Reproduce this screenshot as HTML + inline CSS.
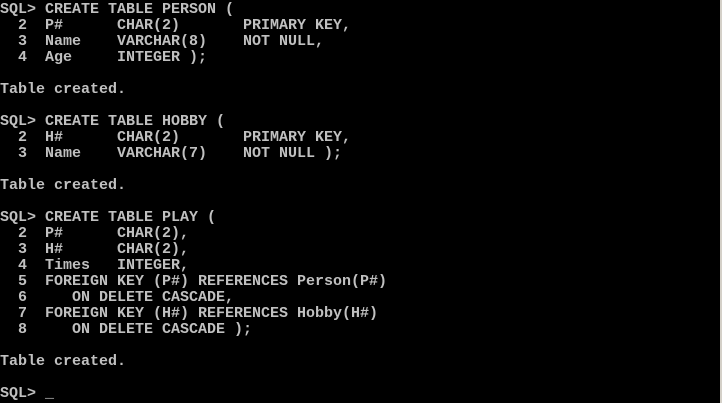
<!DOCTYPE html>
<html><head><style>
html,body{margin:0;padding:0;background:#000;}
body{width:722px;height:403px;overflow:hidden;position:relative;}
pre{margin:0;position:absolute;left:0;top:2px;font-family:"Liberation Mono",monospace;font-size:15px;line-height:16px;color:#c0c0c0;font-weight:bold;}
.edge{position:absolute;right:0;top:0;width:2px;height:403px;background:#d4d0c8;}
</style></head><body>
<pre>SQL&gt; CREATE TABLE PERSON (
  2  P#      CHAR(2)       PRIMARY KEY,
  3  Name    VARCHAR(8)    NOT NULL,
  4  Age     INTEGER );

Table created.

SQL&gt; CREATE TABLE HOBBY (
  2  H#      CHAR(2)       PRIMARY KEY,
  3  Name    VARCHAR(7)    NOT NULL );

Table created.

SQL&gt; CREATE TABLE PLAY (
  2  P#      CHAR(2),
  3  H#      CHAR(2),
  4  Times   INTEGER,
  5  FOREIGN KEY (P#) REFERENCES Person(P#)
  6     ON DELETE CASCADE,
  7  FOREIGN KEY (H#) REFERENCES Hobby(H#)
  8     ON DELETE CASCADE );

Table created.

SQL&gt; _</pre>
<div class="edge"></div>
</body></html>
